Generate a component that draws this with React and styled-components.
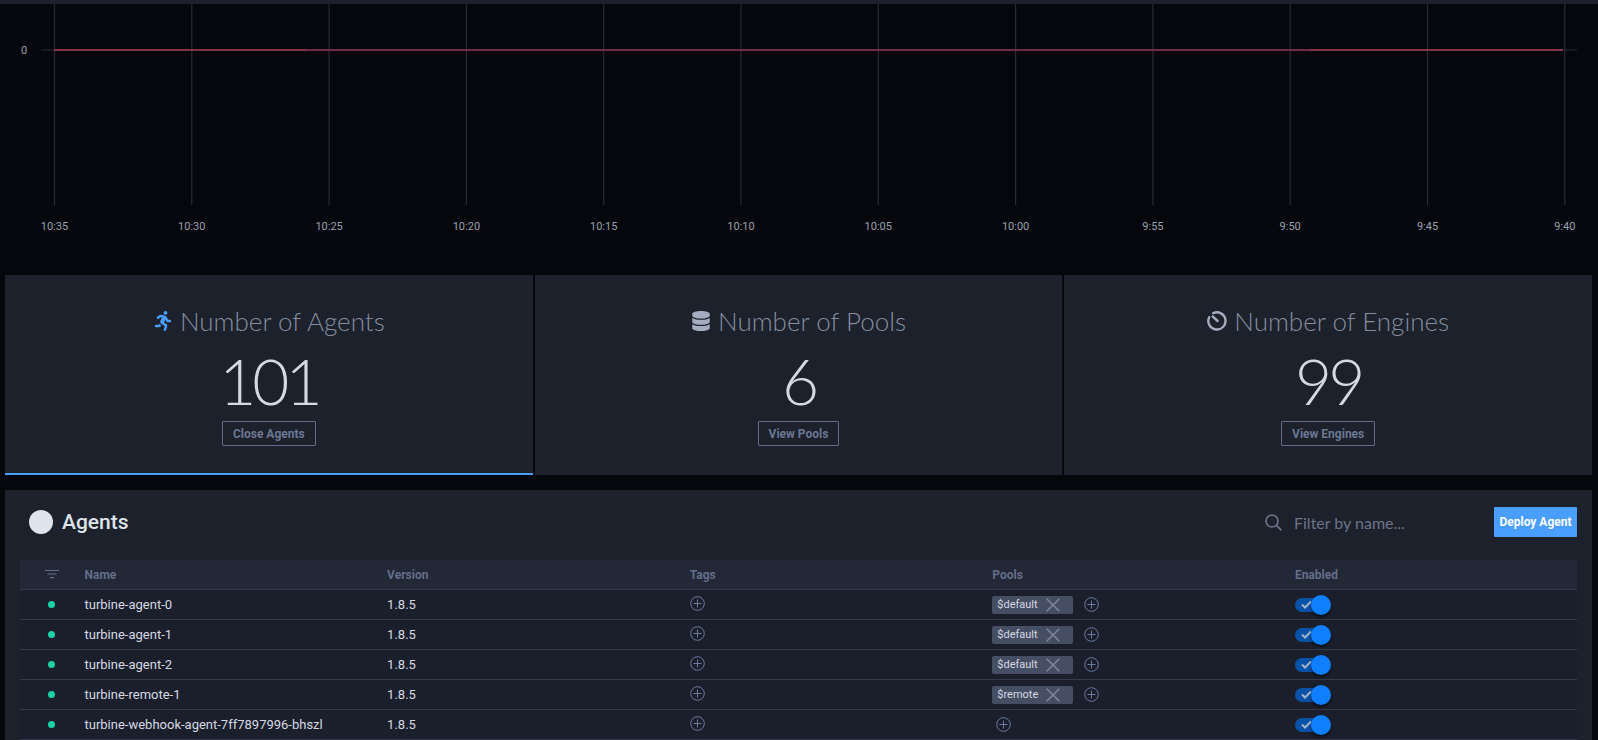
import React from 'react';
import styled, { createGlobalStyle } from 'styled-components';
import { FaRunning, FaDatabase } from 'react-icons/fa';

const Global = createGlobalStyle`
  html, body { margin: 0; padding: 0; background: #05070c; height: 740px; overflow: hidden; }
  * { box-sizing: border-box; }
  body { font-family: Roboto, "Liberation Sans", sans-serif; }
`;

const Page = styled.div`
  display: flex;
  flex-direction: column;
  height: 740px;
  overflow: hidden;
`;
const TopBar = styled.div`
  height: 4px;
  background: #1c212b;
`;
const ChartWrap = styled.div`
  height: 271px;
  svg { display: block; }
`;
const AxisText = styled.text`
  font-family: Roboto, sans-serif;
  font-size: 11px;
  fill: #9ba1ae;
  text-anchor: middle;
`;
const Cards = styled.div`
  display: grid;
  grid-template-columns: repeat(3, 1fr);
  gap: 2px;
  margin: 0 6px 0 5px;
`;
const Card = styled.div`
  height: 200px;
  background: #1c212b;
  border-bottom: 2px solid ${p => (p.$active ? '#4a9eff' : '#1c212b')};
  display: flex;
  flex-direction: column;
  align-items: center;
  padding-top: 26px;
`;
const CardTitle = styled.div`
  display: flex;
  align-items: center;
  gap: 7px;
  height: 40px;
  font-family: Lato, sans-serif;
  font-weight: 300;
  font-size: 26px;
  color: #858d9f;
  svg { flex: none; }
`;
const CardNumber = styled.div`
  font-family: Lato, sans-serif;
  font-weight: 300;
  font-size: 64px;
  line-height: 80px;
  letter-spacing: -4px;
  color: #d5d9e3;
`;
const OutlineButton = styled.button`
  height: 25px;
  padding: 0 10px;
  margin-top: 0;
  background: transparent;
  border: 1px solid #5f6c8a;
  border-radius: 1px;
  font-family: Roboto, sans-serif;
  font-size: 12px;
  font-weight: 700;
  color: #6b7793;
`;
const Panel = styled.section`
  flex: 1;
  margin: 15px 6px 0 5px;
  background: #1c212b;
  padding: 0 15px;
`;
const PanelHead = styled.header`
  height: 70px;
  display: flex;
  align-items: center;
  padding: 0 0 6px 9px;
`;
const HeadDot = styled.span`
  width: 24px;
  height: 24px;
  border-radius: 50%;
  background: #dfe3eb;
  margin-right: 9px;
`;
const PanelTitle = styled.h2`
  margin: 0;
  flex: 1;
  font-family: Roboto, sans-serif;
  font-weight: 500;
  font-size: 21px;
  color: #dfe3eb;
`;
const Filter = styled.div`
  display: flex;
  align-items: center;
  width: 229px;
  gap: 12px;
  font-family: Lato, sans-serif;
  font-size: 16px;
  color: #6b7489;
`;
const DeployButton = styled.button`
  width: 83px;
  height: 30px;
  border: 0;
  border-radius: 1px;
  background: #4a9eff;
  color: #fff;
  font-family: Roboto, sans-serif;
  font-weight: 700;
  font-size: 12px;
  padding: 0;
`;
const Columns = '64.5px repeat(4, 302.6px) 1fr';
const HeadRow = styled.div`
  display: grid;
  grid-template-columns: ${Columns};
  align-items: center;
  height: 30px;
  background: #222836;
  border-bottom: 1px solid #333a4a;
  font-size: 12px;
  font-weight: 700;
  color: #646e88;
`;
const Row = styled.div`
  display: grid;
  grid-template-columns: ${Columns};
  align-items: center;
  height: 30px;
  background: #1b1f2b;
  border-bottom: 1px solid #333a4a;
  font-size: 13px;
  color: #d5d9e3;
`;
const StatusCell = styled.div`
  display: flex;
  justify-content: center;
  padding-right: 1px;
`;
const StatusDot = styled.span`
  width: 7px;
  height: 7px;
  border-radius: 50%;
  background: #1bd1a5;
`;
const PoolCell = styled.div`
  display: flex;
  align-items: center;
  gap: 11px;
`;
const Chip = styled.span`
  width: 81px;
  height: 18px;
  display: flex;
  align-items: center;
  justify-content: space-between;
  padding: 0 13px 0 5px;
  border-radius: 2px;
  background: #464e63;
  font-size: 11px;
  color: #d5d9e3;
`;
const PlusWrap = styled.span`
  display: flex;
  margin-left: ${p => (p.$inset ? '4px' : '0')};
`;
const Toggle = styled.span`
  position: relative;
  display: block;
  width: 22px;
  height: 14px;
  border-radius: 7px 0 0 7px;
  background: #0a52a8;
`;
const Knob = styled.span`
  position: absolute;
  left: 16px;
  top: -3px;
  width: 20px;
  height: 20px;
  border-radius: 50%;
  background: #0f7fff;
  box-shadow: 0 2px 3px rgba(0, 0, 0, 0.55);
`;
const Check = styled.svg`
  position: absolute;
  left: 6px;
  top: 2.5px;
`;

const PlusIcon = () => (
  <svg width="15" height="15" viewBox="0 0 15 15" fill="none" stroke="#6a7a9e" strokeWidth="1">
    <circle cx="7.5" cy="7.5" r="6.8" />
    <path d="M7.5 3.5v8M3.5 7.5h8" />
  </svg>
);
const CloseIcon = () => (
  <svg width="14" height="14" viewBox="0 0 14 14" fill="none" stroke="#7d869c" strokeWidth="1.5">
    <path d="M.7.7l12.6 12.6M13.3.7L.7 13.3" />
  </svg>
);
const EngineIcon = () => (
  <svg width="20" height="20" viewBox="0 0 20 20" fill="none" stroke="#a4adc0">
    <path d="M6.2 2.2A8.6 8.6 0 1 1 2.2 6.2" strokeWidth="2.4" strokeLinecap="round" />
    <path d="M5.6 5.4l5 4.6" strokeWidth="2.4" strokeLinecap="round" />
  </svg>
);
const SearchIcon = () => (
  <svg width="17" height="17" viewBox="0 0 17 17" fill="none" stroke="#6b7489" strokeWidth="1.7">
    <circle cx="7" cy="7" r="6" />
    <path d="M11.4 11.4l5 5" />
  </svg>
);
const FilterIcon = () => (
  <svg width="14" height="9" viewBox="0 0 14 9" fill="#646e88">
    <rect x="0" y="0" width="14" height="1" />
    <rect x="2.5" y="3.5" width="9" height="1" />
    <rect x="5" y="7" width="4" height="1.2" />
  </svg>
);

const ticks = ['10:35', '10:30', '10:25', '10:20', '10:15', '10:10', '10:05', '10:00', '9:55', '9:50', '9:45', '9:40'];

const Chart = () => (
  <ChartWrap>
    <svg width="1598" height="271" viewBox="0 0 1598 271">
      <line x1="41" x2="1577" y1="46" y2="46" stroke="#1c212b" strokeWidth="1.5" />
      {ticks.map((t, i) => {
        const x = 54.5 + i * 137.3;
        return (
          <g key={t}>
            <line x1={x} x2={x} y1="0" y2="201" stroke="#272b36" strokeWidth="1.2" />
            <AxisText x={x} y="226">{t}</AxisText>
          </g>
        );
      })}
      <path d="M54 46H306" stroke="#a93a5a" strokeWidth="1.5" />
      <path d="M306 46H1310" stroke="#8f3350" strokeWidth="1.5" />
      <path d="M1310 46H1563" stroke="#a93a5a" strokeWidth="1.5" />
      <AxisText x="24" y="50">0</AxisText>
    </svg>
  </ChartWrap>
);

const agents = [
  { name: 'turbine-agent-0', pool: '$default' },
  { name: 'turbine-agent-1', pool: '$default' },
  { name: 'turbine-agent-2', pool: '$default' },
  { name: 'turbine-remote-1', pool: '$remote' },
  { name: 'turbine-webhook-agent-7ff7897996-bhszl' },
];

export default function App() {
  return (
    <Page>
      <Global />
      <TopBar />
      <Chart />
      <Cards>
        <Card $active>
          <CardTitle><FaRunning size={20} color="#4a9eff" />Number of Agents</CardTitle>
          <CardNumber>101</CardNumber>
          <OutlineButton>Close Agents</OutlineButton>
        </Card>
        <Card>
          <CardTitle><FaDatabase size={20} color="#a4adc0" />Number of Pools</CardTitle>
          <CardNumber>6</CardNumber>
          <OutlineButton>View Pools</OutlineButton>
        </Card>
        <Card>
          <CardTitle><EngineIcon />Number of Engines</CardTitle>
          <CardNumber>99</CardNumber>
          <OutlineButton>View Engines</OutlineButton>
        </Card>
      </Cards>
      <Panel>
        <PanelHead>
          <HeadDot />
          <PanelTitle>Agents</PanelTitle>
          <Filter><SearchIcon />Filter by name...</Filter>
          <DeployButton>Deploy Agent</DeployButton>
        </PanelHead>
        <HeadRow>
          <StatusCell><FilterIcon /></StatusCell>
          <div>Name</div>
          <div>Version</div>
          <div>Tags</div>
          <div>Pools</div>
          <div>Enabled</div>
        </HeadRow>
        {agents.map(a => (
          <Row key={a.name}>
            <StatusCell><StatusDot /></StatusCell>
            <div>{a.name}</div>
            <div>1.8.5</div>
            <div><PlusIcon /></div>
            <PoolCell>
              {a.pool && <Chip>{a.pool}<CloseIcon /></Chip>}
              <PlusWrap $inset={!a.pool}><PlusIcon /></PlusWrap>
            </PoolCell>
            <div>
              <Toggle>
                <Check width="11" height="9" viewBox="0 0 11 9" fill="none" stroke="#9fb3cc" strokeWidth="2">
                  <path d="M1 4.5l3 3 6-6" />
                </Check>
                <Knob />
              </Toggle>
            </div>
          </Row>
        ))}
      </Panel>
    </Page>
  );
}
